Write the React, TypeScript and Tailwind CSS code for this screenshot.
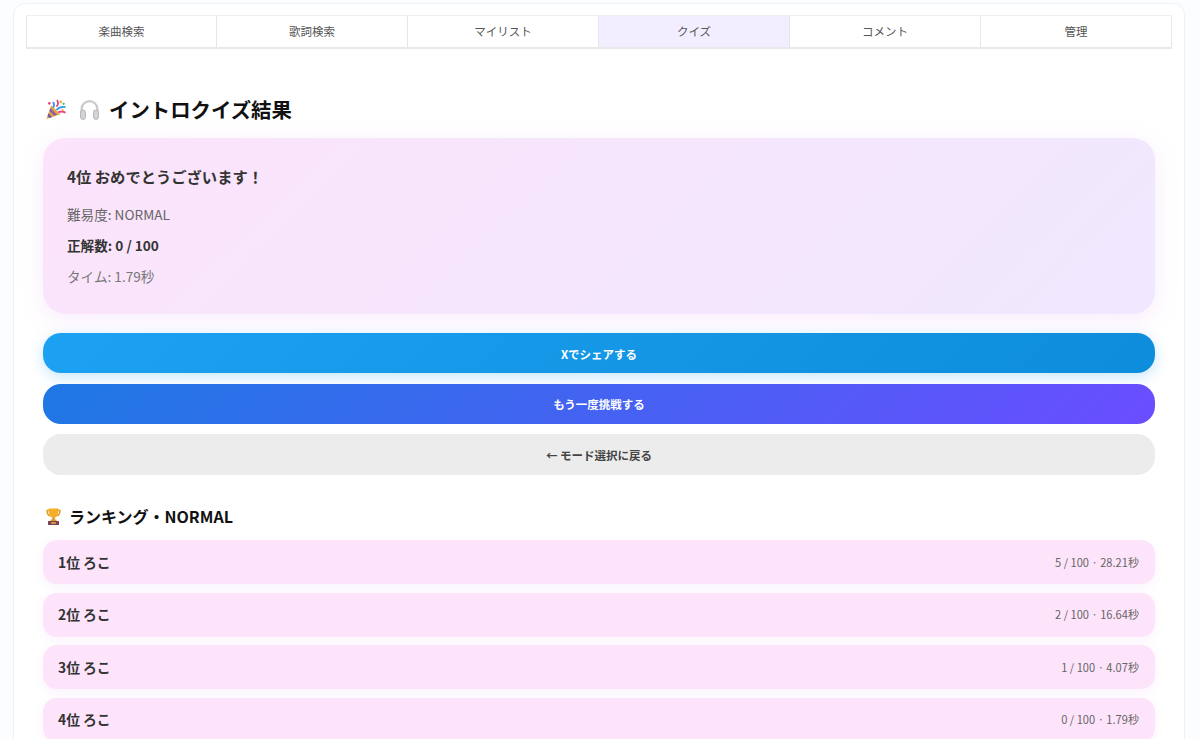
const font = { fontFamily: '"Noto Sans CJK JP", "Noto Sans", sans-serif' }

const tabs = ['楽曲検索', '歌詞検索', 'マイリスト', 'クイズ', 'コメント', '管理']

const ranking = [
    { rank: '1位 ろこ', score: '5 / 100 · 28.21秒' },
    { rank: '2位 ろこ', score: '2 / 100 · 16.64秒' },
    { rank: '3位 ろこ', score: '1 / 100 · 4.07秒' },
    { rank: '4位 ろこ', score: '0 / 100 · 1.79秒' },
]

const PartyIcon = () => (
    <svg width="20" height="21" viewBox="0 0 21 21" aria-hidden="true">
        <path d="M0.5 20.5 L5.5 6 L15 15.5 Z" fill="#e8a33d" />
        <path d="M2.6 14.5 L6.5 18.4 L3.6 19.4 L1.6 17.4 Z" fill="#6f5aa8" />
        <path d="M4.6 9 L11.6 16 L8.6 17.1 L3.6 12 Z" fill="#8a5fb0" />
        <path d="M7.5 2.5 Q9.5 5.5 7.5 8.5" stroke="#2f9be8" strokeWidth="1.9" fill="none" />
        <path d="M11 7.5 Q14 4 11.5 0.5" stroke="#ef3f8f" strokeWidth="1.9" fill="none" />
        <path d="M11 11 Q15 7 20.5 8" stroke="#2f9be8" strokeWidth="1.9" fill="none" />
        <path d="M13 13.5 Q16.5 11.5 20.5 14" stroke="#ef3f8f" strokeWidth="1.9" fill="none" />
        <circle cx="3.5" cy="4" r="1.4" fill="#ef3f8f" />
        <circle cx="15.5" cy="2.5" r="1.4" fill="#f5b52e" />
        <circle cx="18.5" cy="4.5" r="1.2" fill="#45b36b" />
        <circle cx="17.5" cy="11" r="1.1" fill="#f5b52e" />
    </svg>
)

const HeadphonesIcon = () => (
    <svg width="21" height="21" viewBox="0 0 21 21" aria-hidden="true">
        <path d="M2.6 14 V10 a7.9 7.9 0 0 1 15.8 0 V14" stroke="#c9c9ce" strokeWidth="2.2" fill="none" />
        <rect x="1.5" y="11" width="5" height="9.5" rx="2.4" fill="#d2d2d7" stroke="#a3a3a9" strokeWidth="0.7" />
        <rect x="14.5" y="11" width="5" height="9.5" rx="2.4" fill="#d2d2d7" stroke="#a3a3a9" strokeWidth="0.7" />
    </svg>
)

const TrophyIcon = () => (
    <svg width="15" height="17" viewBox="0 0 15 17" aria-hidden="true">
        <path d="M3.5 2.5 H1 C1 6 2.2 7.5 4.5 8 M11.5 2.5 H14 C14 6 12.8 7.5 10.5 8" stroke="#e29a1f" strokeWidth="1.4" fill="none" />
        <path d="M2.5 0.5 H12.5 C12.5 6.5 11 9.5 7.5 10 C4 9.5 2.5 6.5 2.5 0.5 Z" fill="#f5ae2a" />
        <rect x="6.4" y="9.5" width="2.2" height="3" fill="#d98f1c" />
        <rect x="4.5" y="11.5" width="6" height="1.6" fill="#e29a1f" />
        <rect x="2" y="13" width="11" height="4" rx="0.5" fill="#7d4150" />
        <rect x="5.2" y="14.2" width="4.6" height="1.5" fill="#e8b75a" />
    </svg>
)

const App = () => {
    return (
        <div className="h-[739px] overflow-hidden bg-[#fbfdff] pl-[13px] pr-[14px] pt-[3px]" style={font}>
            <div className="bg-white rounded-t-xl border border-[#eef1f6] px-3 pt-[11px] min-h-[760px]">
                <div className="flex h-[34px] border-b-2 border-[#e9e9ec] border-t border-t-[#efeff2]">
                    {tabs.map((tab, i) => (
                        <div
                            key={tab}
                            className={`w-[191px] shrink-0 flex items-center justify-center text-[11.5px] border-r first:border-l border-[#e6e6ea] text-[#555] ${i === 3 ? 'bg-[#f3eeff]' : 'bg-white'}`}>
                            {tab}
                        </div>
                    ))}
                </div>

                <div className="px-[17px]">
                    <h1 className="mt-[42px] h-[36px] pl-[3px] flex items-center text-[20.4px] font-bold text-[#111]">
                        <PartyIcon />
                        <span className="ml-[13px]"><HeadphonesIcon /></span>
                        <span className="ml-[9px]">イントロクイズ結果</span>
                    </h1>

                    <div className="mt-[11px] h-[176px] rounded-[22px] bg-[linear-gradient(135deg,#fce4fb,#efe8fe)] px-6 pt-[25px] shadow-[0_6px_24px_rgba(214,150,240,0.18)]">
                        <div className="text-[15.3px] leading-[26px] font-bold text-[#333]">4位 おめでとうございます！</div>
                        <div className="mt-[15px] text-[13.6px] leading-[20px] text-[#666]">難易度: NORMAL</div>
                        <div className="mt-[11px] text-[13.6px] leading-[20px] font-bold text-[#333]">正解数: 0 / 100</div>
                        <div className="mt-[11px] text-[13.6px] leading-[20px] text-[#777]">タイム: 1.79秒</div>
                    </div>

                    <div className="mt-[19px] flex flex-col gap-[10.5px]">
                        <button className="h-[40px] pt-[3px] rounded-[18px] bg-[linear-gradient(135deg,#1da1f2,#0d8ddb)] text-white text-[11.5px] font-bold shadow-[0_4px_14px_rgba(29,161,242,0.25)]">
                            Xでシェアする
                        </button>
                        <button className="h-[40px] pt-[3px] rounded-[18px] bg-[linear-gradient(135deg,#1e78e4,#6a4dff)] text-white text-[11.5px] font-bold">
                            もう一度挑戦する
                        </button>
                        <button className="h-[40.5px] pt-[3px] rounded-[18px] bg-[#ececec] text-[#444] text-[11.5px] font-bold">
                            ← モード選択に戻る
                        </button>
                    </div>

                    <h2 className="mt-[29.5px] h-[24px] pl-[3px] flex items-center gap-[8px] text-[16px] font-bold text-[#111]">
                        <TrophyIcon />
                        <span>ランキング・NORMAL</span>
                    </h2>

                    <div className="mt-[12px] flex flex-col gap-[8.5px]">
                        {ranking.map(row => (
                            <div
                                key={row.rank}
                                className="h-[44px] shrink-0 rounded-[14px] bg-[#fde4fb] pl-[15px] pr-[16px] flex items-center justify-between shadow-[0_3px_10px_rgba(230,170,240,0.15)]">
                                <span className="text-[13.8px] font-bold text-[#333]">{row.rank}</span>
                                <span className="text-[11.1px] text-[#666]">{row.score}</span>
                            </div>
                        ))}
                    </div>
                </div>
            </div>
        </div>
    )
}

export default App
